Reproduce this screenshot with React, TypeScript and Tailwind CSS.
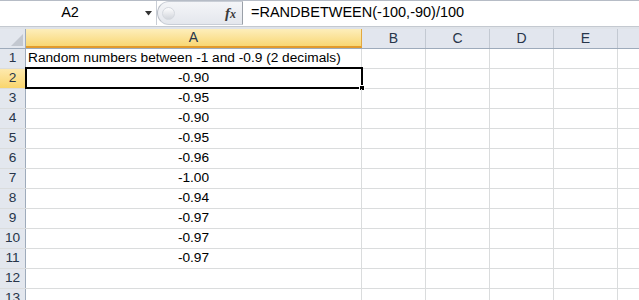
import React from "react";

const values = ["", "-0.90", "-0.95", "-0.90", "-0.95", "-0.96", "-1.00", "-0.94", "-0.97", "-0.97", "-0.97", "", ""];
const otherCols = ["B", "C", "D", "E"];

const font = { fontFamily: '"Liberation Sans", Arial, sans-serif' };

const FormulaBar = () => (
  <div className="flex h-[25px] border-t border-[#b6bcc6] bg-white">
    <div className="relative flex w-[157px] items-center justify-center border-r border-[#c9ced6] pr-[16px]">
      <span className="text-[14.5px] text-black">A2</span>
      <svg className="absolute right-[3px] top-[10px]" width="8" height="5" viewBox="0 0 8 5">
        <path d="M0 0 H7 L3.5 4.5 Z" fill="#333" />
      </svg>
    </div>
    <div className="flex w-[86px] items-center rounded-l-[12px] border border-l-[#b9bec6] border-y-[#c9ced6] border-r-[#9aa0a8] bg-gradient-to-b from-[#f4f5f8] to-[#e4e7ed]">
      <div className="ml-[4px] h-[13px] w-[13px] rounded-full border border-[#d4d8de] bg-gradient-to-b from-[#fdfdfe] to-[#d2d6dc]" />
      <span className="ml-auto mr-[6px] text-[15px] font-bold italic text-[#3a3a3a]" style={{ fontFamily: '"Liberation Serif", serif' }}>
        f<span className="text-[12px]">x</span>
      </span>
    </div>
    <div className="flex flex-1 items-center pl-[8px] text-[14.5px] text-black">=RANDBETWEEN(-100,-90)/100</div>
  </div>
);

const ColumnHeaders = () => (
  <div className="flex h-[20px] border-b border-[#9eabbb] text-[14px] text-[#27354a]">
    <div className="relative w-[26px] border-r border-[#9eabbb] bg-[#e3e7ee]">
      <svg className="absolute bottom-[2px] right-[2px]" width="12" height="12" viewBox="0 0 12 12">
        <path d="M12 0 V12 H0 Z" fill="#c3c8d0" />
      </svg>
    </div>
    <div className="flex w-[336px] items-center justify-center border-r border-[#e2a83f] border-b-2 border-b-[#e29b2c] bg-gradient-to-b from-[#fdeebb] to-[#f9d772]">A</div>
    {otherCols.map((c) => (
      <div key={c} className="flex w-[64px] items-center justify-center border-r border-[#c3c9d2] bg-[#e2e6ee]">
        {c}
      </div>
    ))}
    <div className="flex-1 bg-[#e2e6ee]" />
  </div>
);

export default function App() {
  return (
    <div className="h-[300px] w-[639px] overflow-hidden bg-white" style={font}>
      <FormulaBar />
      <div className="h-[1px] bg-white" />
      <div className="h-[3px] border-t border-[#c4c9d0] bg-[#dfe3e9]" />
      <ColumnHeaders />
      {values.map((v, i) => {
        const row = i + 1;
        const selected = row === 2;
        return (
          <div key={row} className="flex h-[20px] border-b border-[#dadcdd] text-[13.7px]">
            <div
              className={
                selected
                  ? "flex w-[26px] items-center justify-center border-r border-[#e29b2c] bg-gradient-to-b from-[#fde9ad] to-[#f9d56c] text-[#27354a]"
                  : "flex w-[26px] items-center justify-center border-r border-[#9eabbb] bg-[#e3e7ee] text-[#27354a]"
              }
            >
              {row}
            </div>
            <div
              className={
                row === 1
                  ? "flex w-[336px] items-center whitespace-nowrap border-r border-[#dadcdd] pl-[2px] text-black"
                  : "relative flex w-[336px] items-center justify-center border-r border-[#dadcdd] text-black"
              }
            >
              {row === 1 ? "Random numbers between -1 and -0.9 (2 decimals)" : v}
              {selected && (
                <div className="absolute -left-[1px] -top-[2px] h-[22px] w-[338px] border-2 border-black">
                  <div className="absolute -bottom-[4px] -right-[4px] h-[6px] w-[6px] border border-white bg-black" />
                </div>
              )}
            </div>
            {otherCols.map((c) => (
              <div key={c} className="w-[64px] border-r border-[#dadcdd]" />
            ))}
            <div className="flex-1" />
          </div>
        );
      })}
    </div>
  );
}
